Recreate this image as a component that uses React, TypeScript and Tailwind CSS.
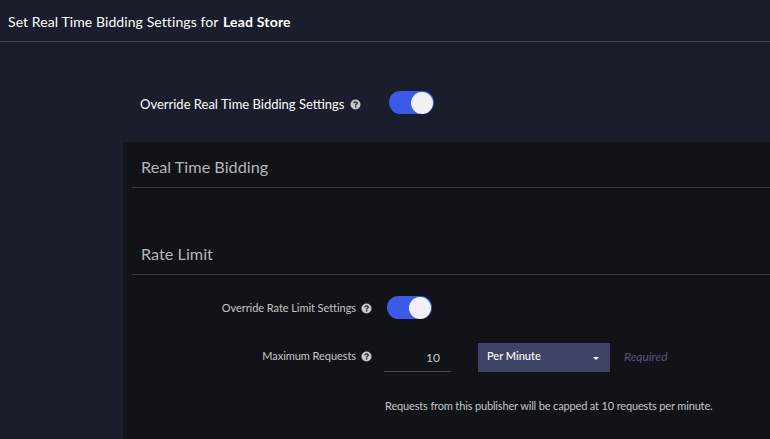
import React from "react";

function Help() {
  return (
    <svg width="11" height="11" viewBox="0 0 11 11" className="shrink-0">
      <circle cx="5.5" cy="5.5" r="5" fill="#c9c9cb" />
      <path d="M3.8 4.3C3.9 3.3 4.6 2.8 5.5 2.8C6.5 2.8 7.2 3.4 7.2 4.2C7.2 5.3 5.6 5.3 5.6 6.4" fill="none" stroke="#1a1c26" strokeWidth="1.3" />
      <rect x="4.9" y="7.2" width="1.4" height="1.3" fill="#1a1c26" />
    </svg>
  );
}

function Toggle() {
  return (
    <div className="w-[45px] h-[23px] rounded-full bg-[#3b5be6] flex items-center justify-end pr-px">
      <div className="w-[22px] h-[22px] rounded-full bg-[#f1f1f3]" />
    </div>
  );
}

function SectionTitle({ children }: { children: React.ReactNode }) {
  return (
    <div className="ml-[9px] pl-[9px] h-[46px] border-b border-[#3a3b42] flex items-center text-[16.25px] leading-none text-[#b4b6ba] pt-[6px]">
      {children}
    </div>
  );
}

export default function App() {
  return (
    <div
      className="w-[770px] h-[439px] overflow-hidden bg-[#1a1d2b] text-white"
      style={{ fontFamily: "Lato, sans-serif" }}
    >
      <div className="h-[42px] border-b border-[#44464f] pl-2 flex items-center text-[14px] tracking-[0.09px] pt-px">
        <span>Set Real Time Bidding Settings for&nbsp;</span>
        <span className="font-bold ml-[1px] tracking-[0.2px]">Lead Store</span>
      </div>
      <div className="h-[100px] pl-[140px] pt-[49px]">
        <div className="flex items-center h-[23px]">
          <span className="text-[13px] mt-[4px]">Override Real Time Bidding Settings</span>
          <span className="ml-[5px] mt-[4px]"><Help /></span>
          <span className="ml-[28px]"><Toggle /></span>
        </div>
      </div>
      <div className="ml-[123px] h-[297px] bg-[#121318]">
        <SectionTitle>Real Time Bidding</SectionTitle>
        <div className="h-[41px]" />
        <SectionTitle>Rate Limit</SectionTitle>
        <div className="flex items-center h-[23px] mt-[21px]">
          <div className="w-[249px] flex justify-end items-center gap-[5px] text-[11px] tracking-[-0.06px] text-[#c4c5c8] pt-[1px]">
            <span>Override Rate Limit Settings</span>
            <Help />
          </div>
          <span className="ml-[15px]"><Toggle /></span>
        </div>
        <div className="flex h-[29px] mt-[24px]">
          <div className="w-[249px] flex justify-end items-center gap-[5px] text-[11px] tracking-[-0.06px] text-[#c4c5c8] pb-[2px]">
            <span>Maximum Requests</span>
            <Help />
          </div>
          <div className="ml-[12px] w-[67px] h-[29px] border-b border-[#45475f] text-right pr-[11px] pt-[6px] text-[12px] leading-[18px] text-[#c8c9cc]">
            10
          </div>
          <div className="ml-[27px] w-[132px] h-[29px] bg-[#3f4365] flex items-center justify-between pl-[9px] pr-[11px] text-[11px] font-medium pb-[2px]">
            <span>Per Minute</span>
            <span className="w-0 h-0 mt-[3px] border-x-[3px] border-x-transparent border-t-[3px] border-t-white" />
          </div>
          <div className="ml-[14px] flex items-center text-[12px] italic text-[#525878] pb-px">Required</div>
        </div>
        <div className="ml-[262px] mt-[26px] text-[11px] tracking-[-0.15px] leading-[16px] text-[#c4c5c8]">
          Requests from this publisher will be capped at 10 requests per minute.
        </div>
      </div>
    </div>
  );
}
